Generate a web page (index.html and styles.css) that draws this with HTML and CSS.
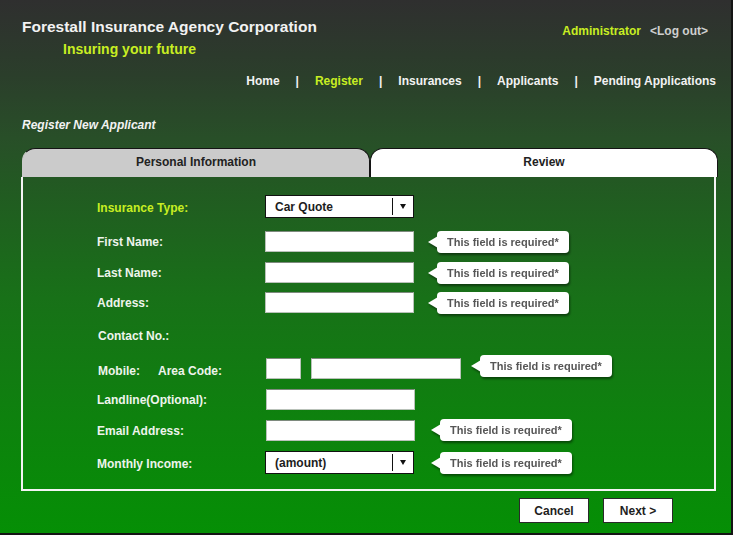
FILE: index.html
```html
<!DOCTYPE html>
<html lang="en">
<head>
<meta charset="utf-8">
<title>Register New Applicant</title>
<link rel="stylesheet" href="styles.css">
</head>
<body>
<div class="page">
  <header class="header">
    <div class="brand">
      <div class="title">Forestall Insurance Agency Corporation</div>
      <div class="tagline">Insuring your future</div>
    </div>
    <div class="user"><span class="user-name">Administrator</span><span class="logout">&lt;Log out&gt;</span></div>
  </header>
  <nav class="nav">
    <span class="nav-item">Home</span><span class="sep">|</span>
    <span class="nav-item active">Register</span><span class="sep">|</span>
    <span class="nav-item">Insurances</span><span class="sep">|</span>
    <span class="nav-item">Applicants</span><span class="sep">|</span>
    <span class="nav-item">Pending Applications</span>
  </nav>
  <main class="content">
    <h1 class="page-title">Register New Applicant</h1>
    <div class="wizard">
      <div class="tabs">
        <div class="tab tab-current">Personal Information</div>
        <div class="tab tab-next">Review</div>
      </div>
      <div class="panel">
        <div class="form">
          <div class="label label-accent h23">Insurance Type:</div>
          <div class="field h23">
            <div class="select"><span class="select-text">Car Quote</span><span class="select-btn"><span class="caret"></span></span></div>
          </div>

          <div class="label">First Name:</div>
          <div class="field"><div class="input"></div><div class="tip">This field is required*</div></div>

          <div class="label">Last Name:</div>
          <div class="field"><div class="input"></div><div class="tip">This field is required*</div></div>

          <div class="label">Address:</div>
          <div class="field"><div class="input"></div><div class="tip">This field is required*</div></div>

          <div class="label label-contact">Contact No.:</div>
          <div class="field"></div>

          <div class="label label-mobile"><span class="mobile">Mobile:</span><span>Area Code:</span></div>
          <div class="field">
            <div class="input input-area"></div><div class="input input-mobile"></div><div class="tip tip-mobile">This field is required*</div>
          </div>

          <div class="label">Landline(Optional):</div>
          <div class="field"><div class="input input-shift"></div></div>

          <div class="label">Email Address:</div>
          <div class="field"><div class="input input-shift"></div><div class="tip tip-wide">This field is required*</div></div>

          <div class="label h23">Monthly Income:</div>
          <div class="field h23">
            <div class="select"><span class="select-text">(amount)</span><span class="select-btn"><span class="caret"></span></span></div>
            <div class="tip tip-select">This field is required*</div>
          </div>
        </div>
      </div>
      <div class="actions">
        <button class="btn" type="button">Cancel</button>
        <button class="btn" type="button">Next &gt;</button>
      </div>
    </div>
  </main>
</div>
</body>
</html>
```

FILE: styles.css
```css
* { box-sizing: border-box; }
html, body { margin: 0; padding: 0; }
body {
  font-family: "Liberation Sans", Arial, sans-serif;
  background: #111;
}
.page {
  width: 733px;
  height: 535px;
  border-right: 2px solid #151515;
  border-bottom: 2px solid #151515;
  background: linear-gradient(to bottom,
    #2f2f2f 0%,
    #2b3e2b 14%,
    #284f28 26%,
    #215c21 37%,
    #187118 56%,
    #0e810e 78%,
    #058f05 100%);
  overflow: hidden;
}

/* header */
.header {
  display: flex;
  justify-content: space-between;
  align-items: flex-start;
  padding: 18px 23px 0 22px;
}
.title {
  font-size: 15.5px;
  line-height: 18px;
  font-weight: bold;
  color: #f2f2f2;
}
.tagline {
  margin: 5px 0 0 41px;
  font-size: 14px;
  line-height: 16px;
  font-weight: bold;
  color: #c8ee22;
}
.user {
  margin-top: 6px;
  display: flex;
  gap: 9px;
  font-size: 12px;
  line-height: 14px;
  font-weight: bold;
}
.user-name { color: #c8ee22; }
.logout { color: #cfcfcf; }

.nav {
  display: flex;
  justify-content: flex-end;
  gap: 16px;
  margin-top: 17px;
  padding-right: 15px;
  font-size: 12px;
  line-height: 14px;
  font-weight: bold;
  color: #f2f2f2;
}
.nav-item.active { color: #c8ee22; }
.sep { color: #f2f2f2; }

/* content */
.content { padding: 0 0 0 22px; }
.page-title {
  margin: 30px 0 0 0;
  font-size: 12px;
  line-height: 14px;
  font-weight: bold;
  font-style: italic;
  color: #f2f2f2;
}
.wizard { width: 696px; margin-top: 16px; }
.tabs { display: flex; }
.tab {
  flex: 0 0 auto;
  padding: 6px 0 8px;
  font-size: 12px;
  line-height: 14px;
  font-weight: bold;
  color: #222;
  text-align: center;
  border: 1px solid #141414;
  border-bottom: none;
  border-radius: 13px 13px 0 0;
}
.tab-current {
  width: 348px;
  background: #cbcbcb;
  border-left-color: #cbcbcb;
}
.tab-next {
  width: 348px;
  background: #ffffff;
}

.panel {
  width: 695px;
  border: 2px solid #f4f4f4;
  border-top: none;
  padding: 19px 0 14px 74px;
  margin-left: -1px;
}
.form {
  display: grid;
  grid-template-columns: 168px 1fr;
  grid-template-rows: 35px 31px 30px 33px 33px 31px 31px 32px 23px;
  align-items: start;
}
.label {
  height: 21px;
  display: flex;
  align-items: center;
  font-size: 12px;
  font-weight: bold;
  color: #eef4ec;
  white-space: nowrap;
}
.label-accent { color: #c8ee22; }
.label-contact { height: 22px; margin-left: 1px; }
.label-mobile { padding-top: 4px; }
.h23 { height: 23px; }
.mobile { margin: 0 0 0 1px; width: 60px; }
.field {
  height: 21px;
  display: flex;
  align-items: center;
}

.input {
  width: 149px;
  height: 21px;
  background: #fff;
  border: 1px solid #b9c2b9;
  border-top-color: #7e8a7e;
}
.input-shift { margin-left: 1px; }
.input-area { width: 35px; margin-left: 1px; }
.input-mobile { width: 150px; margin-left: 10px; }

.select {
  width: 149px;
  height: 23px;
  display: flex;
  align-items: stretch;
  background: #fff;
  border: 1px solid #111;
}
.select-text {
  flex: 1;
  padding-left: 9px;
  font-size: 12px;
  font-weight: bold;
  line-height: 22px;
  color: #1d1d1d;
}
.select-btn {
  width: 21px;
  margin: 2px 0;
  border-left: 1px solid #111;
  display: flex;
  align-items: center;
  justify-content: center;
}
.caret {
  width: 0;
  height: 0;
  border-left: 3.5px solid transparent;
  border-right: 3.5px solid transparent;
  border-top: 5px solid #111;
}

.tip {
  position: relative;
  margin-left: 23px;
  height: 22px;
  padding: 0 10px;
  display: flex;
  align-items: center;
  background: #fff;
  border-radius: 4px;
  font-size: 11px;
  font-weight: bold;
  color: #565656;
  white-space: nowrap;
  filter: drop-shadow(1px 2px 1px rgba(0, 0, 0, 0.45));
}
.tip::before {
  content: "";
  position: absolute;
  left: -9px;
  top: 5px;
  border-top: 6px solid transparent;
  border-bottom: 6px solid transparent;
  border-right: 10px solid #fff;
}
.tip-mobile { margin-left: 19px; top: -3px; }
.tip-wide { margin-left: 25px; top: -1px; }
.tip-select { margin-left: 26px; }

.actions {
  display: flex;
  justify-content: flex-end;
  gap: 14px;
  margin-top: 7px;
  padding-right: 45px;
}
.btn {
  width: 70px;
  height: 25px;
  padding: 0;
  background: #fff;
  border: 1px solid #2a2a2a;
  font-family: "Liberation Sans", Arial, sans-serif;
  font-size: 12px;
  font-weight: bold;
  color: #1e1e1e;
}
```
